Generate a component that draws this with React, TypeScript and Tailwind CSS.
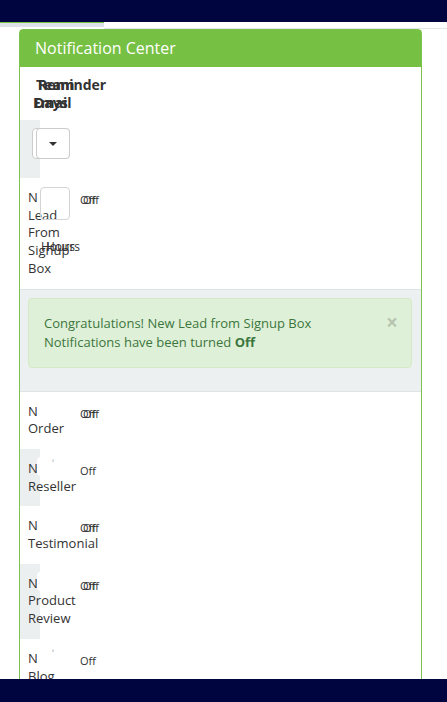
import React from "react";

type Row = { label: string; gray: boolean; double: boolean; tick: boolean };

const ROWS: Row[] = [
  { label: "New Order", gray: false, double: true, tick: false },
  { label: "New Reseller", gray: true, double: false, tick: true },
  { label: "New Testimonial", gray: false, double: true, tick: false },
  { label: "New Product Review", gray: true, double: true, tick: false },
  { label: "New Blog", gray: false, double: false, tick: true },
];

function OffStack({ double }: { double: boolean }) {
  return (
    <div className="grid pt-[14px] text-[11px] leading-[15px] text-[#333]">
      <span className="col-start-1 row-start-1">Off</span>
      {double && <span className="col-start-1 row-start-1 ml-[3px]">Off</span>}
    </div>
  );
}

function LabelCell({ label, gray }: { label: string; gray: boolean }) {
  return (
    <div
      className={
        "w-[20px] shrink-0 py-[11px] pl-2 text-[13px] leading-[17.7px] text-[#333] " +
        (gray ? "bg-[#eceff0]" : "bg-white")
      }
    >
      <div className="w-[12px]">{label}</div>
    </div>
  );
}

function NotificationRow({ row }: { row: Row }) {
  return (
    <div className="relative flex">
      <LabelCell label={row.label} gray={row.gray} />
      <div className="w-[40px] shrink-0" />
      <OffStack double={row.double} />
      {/* white control sitting over the clipped label */}
      <div className="absolute left-[17px] top-[8px] h-[19px] w-[38px] rounded bg-white" />
      {row.tick && (
        <span className="absolute left-[32px] top-[9px] text-[10px] leading-none text-[#9aa]">ʹ</span>
      )}
    </div>
  );
}

export default function App() {
  return (
    <div className="flex h-[702px] w-full flex-col overflow-hidden bg-white font-['Open_Sans',sans-serif]">
      <div className="h-[22px] shrink-0 bg-[#000540]" />
      <div className="flex h-[7px] shrink-0">
        <div className="h-[5px] w-[104px] border-t border-[#7ac143] bg-[#dde2e8]" />
        <div className="flex-1 border-b border-[#e3e6e8]" />
      </div>

      <div className="min-h-0 flex-1 overflow-hidden">
        <div className="ml-[19px] w-[403px] rounded-t border border-[#7cc24e]">
          <div className="bg-[#76c043] px-[15px] pb-[9px] pt-[8px] text-[16px] leading-[20px] text-white">
            Notification Center
          </div>

          {/* column headers */}
          <div className="h-[53px] pt-[9px] text-[14px] font-bold leading-[18px] text-[#333]">
            <div className="grid">
              <span className="col-start-1 row-start-1 ml-[16px]">Team</span>
              <span className="col-start-1 row-start-1 ml-[18px]">Reminder</span>
            </div>
            <div className="grid">
              <span className="col-start-1 row-start-1 ml-[13px]">Email</span>
              <span className="col-start-1 row-start-1 ml-[14px]">Days</span>
            </div>
          </div>

          {/* select row */}
          <div className="flex h-[58px]">
            <div className="w-[20px] shrink-0 bg-[#eceff0]" />
            <div className="-ml-[8px] mt-[8px] grid h-[31px]">
              <div className="col-start-1 row-start-1 h-[31px] w-[38px] rounded border border-[#ccc] bg-white" />
              <div className="col-start-1 row-start-1 ml-[4px] flex h-[31px] w-[34px] items-center justify-center rounded border border-[#ccc] bg-white">
                <span className="h-0 w-0 border-x-[4px] border-t-[4px] border-x-transparent border-t-[#333]" />
              </div>
            </div>
          </div>

          {/* lead row */}
          <div className="relative flex">
            <LabelCell label="New Lead From Signup Box" gray={false} />
            <div className="w-[40px] shrink-0" />
            <OffStack double />
            <div className="absolute left-[17px] top-[8px] h-[19px] w-[38px] rounded bg-white" />
            <div className="absolute left-[20px] top-[9px] h-[33px] w-[30px] rounded border border-[#d4d4d4]" />
            <div className="absolute left-[21px] top-[61px] grid text-[12px] leading-[16px] text-[#333]">
              <span className="col-start-1 row-start-1">Hours</span>
              <span className="col-start-1 row-start-1 ml-[5px]">Hours</span>
            </div>
          </div>

          {/* alert band */}
          <div className="border-y border-[#dfe3e5] bg-[#ecf0f1] pb-[23px] pl-[8px] pr-[9px] pt-[8px]">
            <div className="flex items-start rounded border border-[#d6e9c6] bg-[#dff0d8] px-[15px] py-[15px] text-[13px] leading-[19px] text-[#3c763d]">
              <div className="flex-1">
                Congratulations! New Lead from Signup Box
                <br />
                Notifications have been turned <b>Off</b>
              </div>
              <span className="-mr-[2px] -mt-[2px] text-[21px] font-bold leading-[21px] text-black/20">×</span>
            </div>
          </div>

          {ROWS.map((r) => (
            <NotificationRow key={r.label} row={r} />
          ))}
          <div className="h-[60px]" />
        </div>
      </div>

      <div className="h-[23px] shrink-0 bg-[#000540]" />
    </div>
  );
}
